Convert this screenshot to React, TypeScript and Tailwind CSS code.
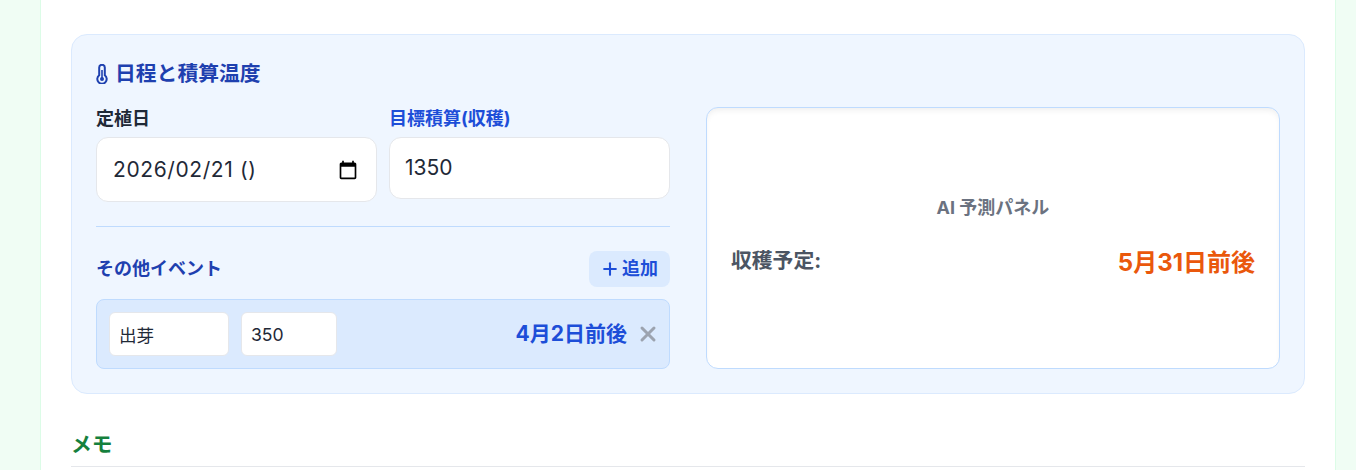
import { Plus, X } from "lucide-react";

const font = "font-['Inter','Noto_Sans_CJK_JP',sans-serif]";

function ThermoGlyph() {
  return (
    <svg width="12" height="20" viewBox="0 0 12 20" fill="none" stroke="currentColor" className="shrink-0">
      <path d="M3.2 11.2V3.6a2.8 2.8 0 0 1 5.6 0v7.6a4.7 4.7 0 1 1-5.6 0Z" strokeWidth="2" />
      <path d="M6 6v8" strokeWidth="1.6" />
      <circle cx="6" cy="15" r="2" fill="currentColor" stroke="none" />
    </svg>
  );
}

function CalendarGlyph() {
  return (
    <svg width="20" height="20" viewBox="0 0 24 24" fill="currentColor" className="text-black shrink-0">
      <path d="M20 3h-1V1h-2v2H7V1H5v2H4c-1.1 0-2 .9-2 2v16c0 1.1.9 2 2 2h16c1.1 0 2-.9 2-2V5c0-1.1-.9-2-2-2zm0 18H4V8h16v13z" />
    </svg>
  );
}

export default function App() {
  return (
    <div className={`${font} h-[470px] overflow-hidden bg-[#f0fdf4] pr-5 pl-10 text-[#1f2937]`}>
      <div className="h-full border-x border-[#dcfce7] bg-white px-[30px] pt-[34px]">
        <section className="rounded-2xl border border-[#dbeafe] bg-[#eff6ff] p-6">
          <h2 className="mb-5 flex h-7 items-center gap-[7px] pt-[2px] text-[20.8px] leading-7 font-bold text-[#1e40af]">
            <ThermoGlyph />
            <span>日程と積算温度</span>
          </h2>
          <div className="grid grid-cols-2 gap-x-9">
            <div>
              <div className="grid grid-cols-2 gap-3">
                <div>
                  <label className="mb-1 block h-[26px] text-lg leading-6 font-bold text-[#1f2937]">定植日</label>
                  <div className="flex h-[65px] items-center justify-between rounded-xl border border-[#e5e7eb] bg-white pr-[18px] pl-4 text-[21px] tracking-[0.6px] text-[#1f2937]">
                    <span>2026/02/21 ()</span>
                    <CalendarGlyph />
                  </div>
                </div>
                <div>
                  <label className="mb-1 block h-[26px] text-lg leading-6 font-bold text-[#1d4ed8]">目標積算(収穫)</label>
                  <input
                    readOnly
                    value="1350"
                    className="block h-[62px] w-full rounded-xl border border-[#e5e7eb] bg-white px-[15px] pb-[2px] text-[21px] text-[#1f2937] outline-none"
                  />
                </div>
              </div>
              <div className="mt-6 border-t border-[#bfdbfe] pt-6">
                <div className="mb-3 flex items-center justify-between">
                  <h3 className="text-lg font-bold text-[#1e40af]">その他イベント</h3>
                  <button className="flex h-9 items-center gap-[2px] rounded-lg bg-[#dbeafe] px-3 text-lg font-bold text-[#1d4ed8]">
                    <Plus size={20} strokeWidth={2.5} className="-ml-[1px]" />
                    追加
                  </button>
                </div>
                <div className="flex items-center gap-3 rounded-lg border border-[#bfdbfe] bg-[#dbeafe] p-3">
                  <input
                    readOnly
                    value="出芽"
                    className="block h-11 w-[120px] rounded-md border border-[#e5e7eb] bg-white px-[9px] text-[17.6px] text-[#1f2937] outline-none"
                  />
                  <input
                    readOnly
                    value="350"
                    className="block h-11 w-24 rounded-md border border-[#e5e7eb] bg-white px-[9px] text-[17.6px] text-[#1f2937] outline-none"
                  />
                  <span className="ml-auto text-[21px] font-bold text-[#1d4ed8]">4月2日前後</span>
                  <X size={24} strokeWidth={3} className="-mr-[3px] -ml-[3px] text-[#9ca3af]" />
                </div>
              </div>
            </div>
            <div className="flex flex-col justify-center rounded-xl border border-[#bfdbfe] bg-white px-6 pt-6 pb-[27px] shadow-[inset_0_4px_6px_-2px_rgba(0,0,0,0.07)]">
              <p className="mb-[23px] text-center text-lg font-bold text-[#6b7280]">AI 予測パネル</p>
              <div className="flex items-start justify-between">
                <span className="text-[20.8px] font-bold text-[#4b5563]">収穫予定:</span>
                <span className="mt-[2px] text-2xl font-bold text-[#ea580c]">5月31日前後</span>
              </div>
            </div>
          </div>
        </section>
        <h2 className="mt-[37px] border-b border-[#e5e7eb] pb-[7px] text-[20.8px] leading-7 font-bold text-[#15803d]">メモ</h2>
      </div>
    </div>
  );
}
